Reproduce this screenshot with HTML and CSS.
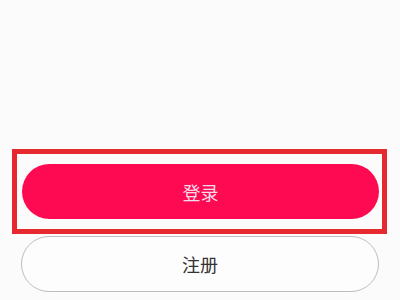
FILE: index.html
```html
<!DOCTYPE html>
<html lang="zh-CN">
<head>
<meta charset="utf-8">
<title>登录</title>
<link rel="stylesheet" href="styles.css">
</head>
<body>
<div class="page">
  <div class="highlight">
    <button class="btn btn-login">登录</button>
  </div>
  <button class="btn btn-register">注册</button>
</div>
</body>
</html>
```
FILE: styles.css
```css
html, body {
  margin: 0;
  padding: 0;
  background: #fbfbfb;
}
.page {
  width: 400px;
  height: 300px;
  box-sizing: border-box;
  padding: 149px 13px 0 12px;
  display: flex;
  flex-direction: column;
  font-family: "Noto Sans CJK SC", "Noto Sans", sans-serif;
}
.highlight {
  height: 85px;
  box-sizing: border-box;
  border: 5px solid #e6282f;
  padding: 10px 3px 10px 5px;
  display: flex;
}
.btn {
  border: none;
  font-family: inherit;
  font-size: 18px;
  line-height: 1;
  border-radius: 999px;
  display: flex;
  align-items: center;
  justify-content: center;
  padding: 0;
}
.btn-login {
  flex: 1;
  height: 55px;
  background: #fe0a52;
  color: #f6dbe8;
}
.btn-register {
  margin-top: 2px;
  margin-left: 9px;
  width: 358px;
  height: 56px;
  box-sizing: border-box;
  background: #fdfdfd;
  border: 1px solid #bdbdbd;
  color: #333333;
}
```
